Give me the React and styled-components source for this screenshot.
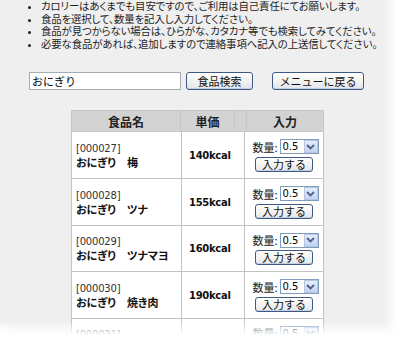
import styled, { createGlobalStyle } from 'styled-components';

const GlobalStyle = createGlobalStyle`
  html, body {
    margin: 0;
    padding: 0;
    background: #ffffff;
  }
  body {
    font-family: "Noto Sans CJK JP", "DejaVu Sans", sans-serif;
    color: #222;
  }
`;

const notes = [
  'カロリーはあくまでも目安ですので、ご利用は自己責任にてお願いします。',
  '食品を選択して、数量を記入し入力してください。',
  '食品が見つからない場合は、ひらがな、カタカナ等でも検索してみてください。',
  '必要な食品があれば、追加しますので連絡事項へ記入の上送信してください。',
];

const foods = [
  { code: '000027', name: 'おにぎり　梅', kcal: 140 },
  { code: '000028', name: 'おにぎり　ツナ', kcal: 155 },
  { code: '000029', name: 'おにぎり　ツナマヨ', kcal: 160 },
  { code: '000030', name: 'おにぎり　焼き肉', kcal: 190 },
  { code: '000031', name: 'おにぎり　鮭', kcal: 170 },
];

const App = () => {
  return (
    <>
      <GlobalStyle />
      <Page>
        <Notes>
          {notes.map(n => (
            <li key={n}>{n}</li>
          ))}
        </Notes>

        <SearchRow>
          <SearchInput defaultValue="おにぎり" />
          <XpButton $w={67}>食品検索</XpButton>
          <XpButton $w={92} $gap={19}>メニューに戻る</XpButton>
        </SearchRow>

        <TableWrap>
          <HeadTable>
            <colgroup>
              <col style={{ width: 109 }} />
              <col style={{ width: 54 }} />
              <col style={{ width: 12 }} />
              <col style={{ width: 77 }} />
            </colgroup>
            <thead>
              <tr>
                <Th>食品名</Th>
                <Th>単価</Th>
                <Th />
                <Th>入力</Th>
              </tr>
            </thead>
          </HeadTable>

          <BodyTable>
            <colgroup>
              <col style={{ width: 110 }} />
              <col style={{ width: 63 }} />
              <col style={{ width: 79 }} />
            </colgroup>
            <tbody>
              {foods.map(f => (
                <tr key={f.code}>
                  <NameCell>
                    <Code>[{f.code}]</Code>
                    <FoodName>{f.name}</FoodName>
                  </NameCell>
                  <PriceCell>{f.kcal}kcal</PriceCell>
                  <InputCell>
                    <QtyRow>
                      <QtyLabel>数量:</QtyLabel>
                      <SelectBox>
                        <QtySelect defaultValue="0.5">
                          <option>0.5</option>
                          <option>1</option>
                          <option>1.5</option>
                          <option>2</option>
                        </QtySelect>
                        <ArrowBox>
                          <svg width="9" height="6" viewBox="0 0 9 6">
                            <path d="M1 1 L4.5 4.5 L8 1" fill="none" stroke="#4d6185" strokeWidth="1.8" />
                          </svg>
                        </ArrowBox>
                      </SelectBox>
                    </QtyRow>
                    <XpButton $w={58} $h={15} $small>入力する</XpButton>
                  </InputCell>
                </tr>
              ))}
            </tbody>
          </BodyTable>
        </TableWrap>

        {/* soft torn-edge fade of the screenshot, lies over the content */}
        <EdgeFade />
      </Page>
    </>
  );
};

const Page = styled.div`
  position: relative;
  width: 400px;
  height: 338px;
  overflow: hidden;
  background: #efefef;
  padding-left: 29px;
  box-sizing: border-box;
`;

const EdgeFade = styled.div`
  position: absolute;
  inset: 0;
  pointer-events: none;
  background:
    linear-gradient(to right, rgba(255, 255, 255, 0) 383px, rgba(255, 255, 255, 0.6) 392px, #fff 397px),
    linear-gradient(to bottom, rgba(255, 255, 255, 0) 321px, rgba(255, 255, 255, 0.6) 329px, #fff 335px),
    radial-gradient(circle at 0 338px, #fff 0, rgba(255, 255, 255, 0) 18px);
`;

const Notes = styled.ul`
  margin: 0;
  padding: 0 0 0 12px;
  font-size: 10.4px;
  line-height: 12.6px;
  letter-spacing: -0.1px;
  font-feature-settings: "palt";
  color: #1e1e1e;
  white-space: nowrap;
  li::marker {
    font-size: 9px;
  }
`;

const SearchRow = styled.div`
  display: flex;
  align-items: center;
  margin-top: 22px;
  height: 18px;
`;

const SearchInput = styled.input`
  box-sizing: border-box;
  width: 152px;
  height: 18px;
  margin: 0;
  padding: 0 2px;
  border: 1px solid #a5acb2;
  background: #fff;
  font-family: "Noto Sans CJK JP", sans-serif;
  font-size: 11px;
  color: #000;
  outline: none;
`;

const XpButton = styled.button`
  box-sizing: border-box;
  width: ${p => p.$w}px;
  height: ${p => p.$h || 18}px;
  margin: 0 0 0 ${p => (p.$gap == null ? 5 : p.$gap)}px;
  padding: 0;
  border: 1px solid #3d5a85;
  border-radius: 3px;
  background: linear-gradient(#ffffff 0%, #f4f4f0 45%, #e2e6ee 100%);
  box-shadow: inset 0 -1px 0 #c5cfe0;
  font-family: "Noto Sans CJK JP", sans-serif;
  font-size: 11px;
  line-height: 1;
  color: #111;
  cursor: pointer;

  ${p => p.$small && `
    margin: 2px auto 0;
    display: block;
  `}
`;

const TableWrap = styled.div`
  margin: 20px 0 0 42px;
  width: 252px;
`;

const HeadTable = styled.table`
  width: 252px;
  table-layout: fixed;
  border-collapse: collapse;
`;

const Th = styled.th`
  height: 21px;
  padding: 0;
  background: #d3d3d3;
  border: 1px solid #c6c6c6;
  border-left-color: #ececec;
  font-size: 12px;
  font-weight: bold;
  color: #222;
  text-align: center;
  box-sizing: border-box;
  &:first-child {
    border-left-color: #c6c6c6;
  }
`;

const BodyTable = styled.table`
  width: 252px;
  table-layout: fixed;
  border-collapse: collapse;
  background: #fff;
`;

const Cell = styled.td`
  height: 46.5px;
  padding: 0;
  border: 1px solid #c3c3c3;
  border-top: none;
  vertical-align: middle;
  box-sizing: border-box;
`;

const NameCell = styled(Cell)`
  padding-left: 4px;
  font-feature-settings: "palt";
`;

const Code = styled.div`
  line-height: 13px;
  color: #333;
  font-family: "DejaVu Sans", sans-serif;
  font-size: 10px;
  letter-spacing: -0.2px;
`;

const FoodName = styled.div`
  font-size: 11px;
  line-height: 14px;
  font-weight: bold;
  color: #111;
  white-space: nowrap;
`;

const PriceCell = styled(Cell)`
  padding-left: 7px;
  font-family: "DejaVu Sans", sans-serif;
  font-size: 10px;
  font-weight: bold;
  letter-spacing: -0.3px;
  color: #111;
`;

const InputCell = styled(Cell)`
  text-align: center;
`;

const QtyRow = styled.div`
  display: flex;
  align-items: center;
  justify-content: center;
  gap: 2px;
  padding-left: 3px;
`;

const QtyLabel = styled.span`
  font-size: 11px;
  color: #222;
`;

const SelectBox = styled.label`
  box-sizing: border-box;
  display: flex;
  align-items: stretch;
  width: 39px;
  height: 15px;
  border: 1px solid #7f9db9;
  background: #fff;
`;

const QtySelect = styled.select`
  appearance: none;
  -webkit-appearance: none;
  flex: 1;
  min-width: 0;
  border: none;
  margin: 0;
  padding: 0 0 0 2px;
  background: transparent;
  font-family: "DejaVu Sans", sans-serif;
  font-size: 10px;
  color: #000;
  outline: none;
`;

const ArrowBox = styled.span`
  box-sizing: border-box;
  width: 14px;
  display: flex;
  align-items: center;
  justify-content: center;
  border: 1px solid #b7c7e3;
  background: linear-gradient(#e6eefc, #c3d3f3);
`;

export default App;
